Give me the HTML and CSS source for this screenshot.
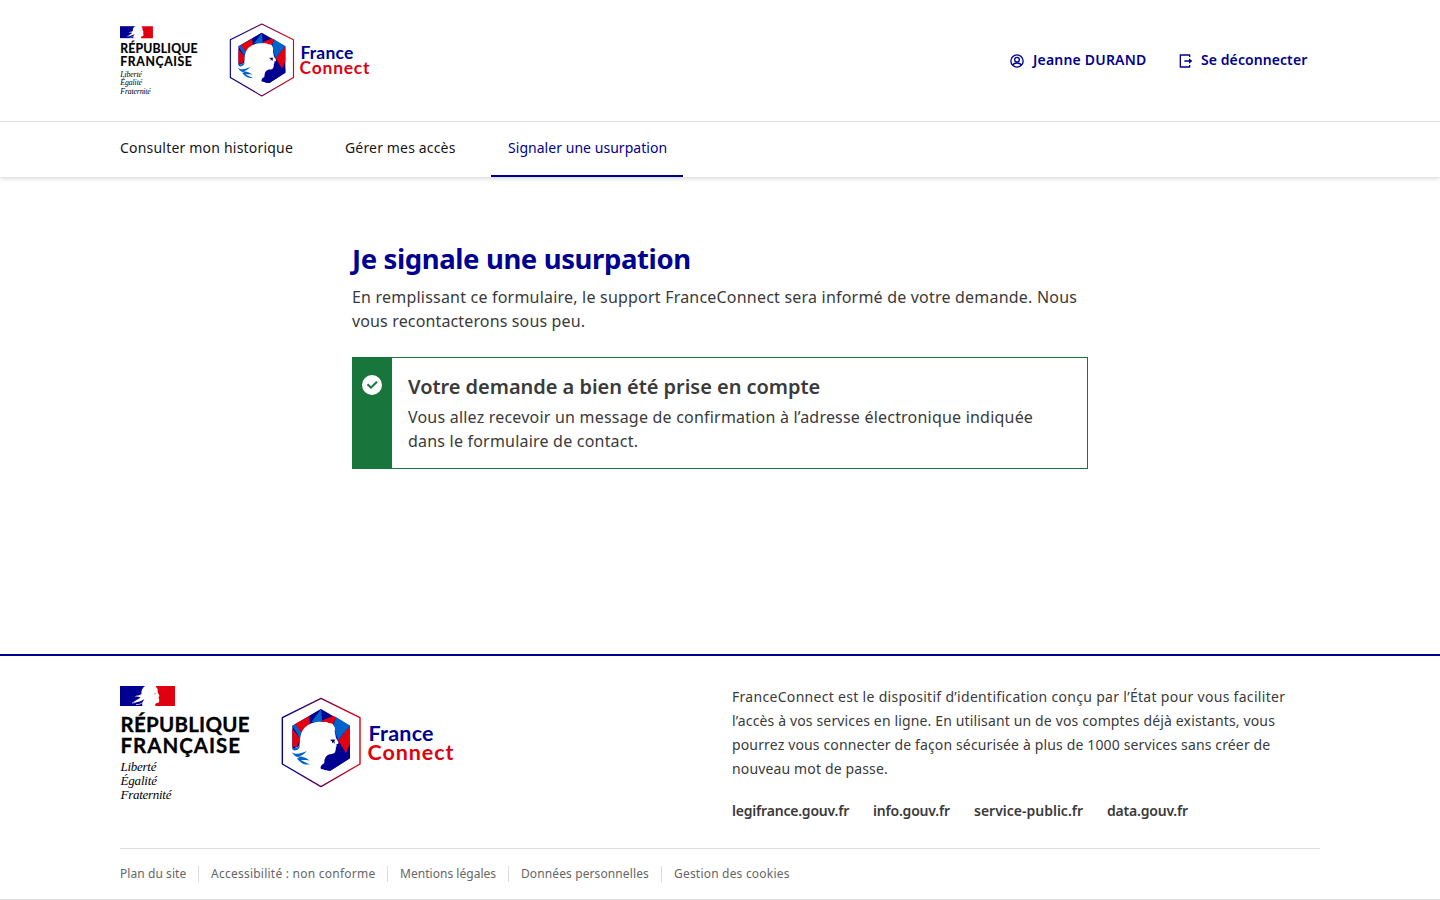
FILE: index.html
```html
<!DOCTYPE html>
<html lang="fr">
<head>
<meta charset="utf-8">
<title>Je signale une usurpation - FranceConnect</title>
<link rel="stylesheet" href="styles.css">
</head>
<body>
<svg class="defs" width="0" height="0" aria-hidden="true">
  <defs>
    <linearGradient id="hexline" x1="0" x2="1" y1="0" y2="0">
      <stop offset=".1" stop-color="#000091"/><stop offset=".95" stop-color="#e1000f"/>
    </linearGradient>
    <symbol id="rf" viewBox="0 0 132 118">
      <path fill="#000091" d="M0 0h26v20H0z"/>
      <path fill="#e1000f" d="M36 0h19v20H35z"/>
      <path fill="#fff" d="M25 0C22 2 21 5 21.500 8c-2 2-5 1-7 2.500 3 0 5 0 6 1l-7 4.500h3c3 0 6-2 8-3-2 3-3 5-2 7h13c-1-2 0-3 2-3 2-.500 2-2 1.500-4l-.500-2 1-1-2-4c1-3-1-5-3-6z"/>
      <path fill="none" stroke="#fff" stroke-width=".8" d="M12 17c4 0 7-3 11-4"/>
      <path fill="none" stroke="#fff" stroke-width=".7" d="M16 18.500c3 .5 5-1 7-2"/>
      <path fill="none" stroke="#777" stroke-width=".7" d="M34 8l2-.5"/>
      <g class="rf-title">
        <text x="0.500" y="45.500" textLength="129">RÉPUBLIQUE</text>
        <text x="0.500" y="66.500" textLength="119.500">FRANÇAISE</text>
      </g>
      <g class="rf-motto">
        <text x="0.500" y="85" textLength="36">Liberté</text>
        <text x="0.500" y="99" textLength="36.500">Égalité</text>
        <text x="0.500" y="113" textLength="51">Fraternité</text>
      </g>
    </symbol>
    <symbol id="fc" viewBox="0 0 174 91">
      <g transform="translate(-9 -7) scale(.33333)">
        <path fill="none" stroke="url(#hexline)" stroke-width="4.200" stroke-linejoin="round" d="M147 25l117 58v139l-117 68-116-68V83z"/>
        <path fill="#000091" d="M147 57l87 50v98l-59 37-28-5-50-75-36 15v-70z"/>
        <path fill="#e1000f" d="M68 103l44-25 6 30-32 24zM61 116l24 30-10 24-14 0zM148 92l35-14 9 3-12 32-22-12zM234 107v55l-12 27-24-38z"/>
        <path fill="#0063cb" d="M61 107l8-4 20 26-5 16zM117 96l30-38 4 40zM192 81l42 26-36 44-14-42z"/>
        <path fill="#000091" d="M112 78l35-21-27 36-6 12z"/>
        <path fill="#fff" d="M61 180c14 2 20-7 22-20 1-24 6-40 18-50 12-9 28-17 47-14 10 0 17-2 23 4 9-2 14 3 15 9 4 4 3 10 2 15l3 15c0 4 2 7 5 12 3 4 5 8 2 11l-5 1 1 6-3 4c2 5-1 7-1 11-2 8-9 8-17 9-12 3-16 14-16 26l-5 4c-6 4-6 9-7 15l-30-12-58-30z"/>
        <path fill="#000091" d="M174 150c5-2 9-1 16-1l-3 4 2 9-5-5-4 3 0-6z"/>
        <path fill="#0063cb" d="M62 173c9 3 16 0 22-8-1 12-10 19-22 15zM59 187c17 10 32 1 45-4-9 13-24 18-34 16 18-1 30 2 43 13-13-3-18-2-26-2 8 5 15 9 27 13-20 4-30-7-40-18 4 0 6 0 8-2-10-1-16-7-23-16z"/>
        <path fill="#000091" d="M196 200l38-12v17l-59 37c-10 0-22 0-20-10 0-6 3-11 9-15-1-7 11-9 19-9 8-2 11-3 13-8z"/>
      </g>
      <text class="fc-name" fill="#000091" x="87.500" y="44" textLength="65">France</text>
      <text class="fc-name" fill="#e1000f" x="86.500" y="62.700" textLength="86">Connect</text>
    </symbol>
  </defs>
</svg>

<header class="header">
  <div class="container header-body">
    <div class="brand">
      <svg class="rf-small" role="img" aria-label="République Française"><use href="#rf"/></svg>
      <svg class="fc-small" role="img" aria-label="FranceConnect"><use href="#fc"/></svg>
    </div>
    <div class="tools">
      <a class="tool user" href="#">
        <svg viewBox="0 0 24 24" fill="none" stroke="currentColor" stroke-width="2"><circle cx="12" cy="12" r="9.2"/><circle cx="12" cy="10" r="3.5"/><path d="M5.500 18c1.500-2.200 3.800-3 6.500-3s5 .8 6.500 3"/></svg>
        <span>Jeanne DURAND</span>
      </a>
      <a class="tool logout" href="#">
        <svg viewBox="0 0 24 24" fill="currentColor"><path d="M5 22a1 1 0 0 1-1-1V3a1 1 0 0 1 1-1h14a1 1 0 0 1 1 1v3h-2V4H6v16h12v-2h2v3a1 1 0 0 1-1 1H5zm13-6v-3h-7v-2h7V8l5 4-5 4z"/></svg>
        <span>Se déconnecter</span>
      </a>
    </div>
  </div>
  <nav class="nav">
    <div class="container nav-list">
      <a class="nav-link history" href="#">Consulter mon historique</a>
      <a class="nav-link access" href="#">Gérer mes accès</a>
      <a class="nav-link report active" href="#">Signaler une usurpation</a>
    </div>
  </nav>
</header>

<main class="main">
  <h1>Je signale une usurpation</h1>
  <p class="intro">En remplissant ce formulaire, le support FranceConnect sera informé de votre demande. Nous<br><span class="tight">vous recontacterons sous peu.</span></p>
  <div class="alert">
    <div class="alert-mark">
      <svg viewBox="0 0 20 20"><circle cx="10" cy="10" r="10" fill="#fff"/><path d="M5.500 9.200l3.500 3.500 6-6" fill="none" stroke="#18753c" stroke-width="2"/></svg>
    </div>
    <div class="alert-text">
      <h2>Votre demande a bien été prise en compte</h2>
      <p>Vous allez recevoir un message de confirmation à l’adresse électronique indiquée<br>dans le formulaire de contact.</p>
    </div>
  </div>
</main>

<footer class="footer">
  <div class="container">
    <div class="footer-body">
      <div class="footer-brand">
        <svg class="rf-large" role="img" aria-label="République Française"><use href="#rf"/></svg>
        <svg class="fc-large" role="img" aria-label="FranceConnect"><use href="#fc"/></svg>
      </div>
      <div class="footer-content">
        <p>FranceConnect est le dispositif d’identification conçu par l’État pour vous faciliter<br><span class="tight">l’accès à vos services en ligne. En utilisant un de vos comptes déjà existants, vous<br>pourrez vous connecter de façon sécurisée à plus de 1000 services sans créer de<br>nouveau mot de passe.</span></p>
        <div class="sites">
          <a class="w117" href="#">legifrance.gouv.fr</a>
          <a class="w77" href="#">info.gouv.fr</a>
          <a class="w109" href="#">service-public.fr</a>
          <a href="#">data.gouv.fr</a>
        </div>
      </div>
    </div>
    <div class="legal">
      <a class="l-plan" href="#">Plan du site</a>
      <a class="l-access" href="#">Accessibilité : non conforme</a>
      <a class="l-mentions" href="#">Mentions légales</a>
      <a class="l-data" href="#">Données personnelles</a>
      <a class="l-cookies" href="#">Gestion des cookies</a>
    </div>
  </div>
</footer>
</body>
</html>
```

FILE: styles.css
```css
* { box-sizing: border-box; }
body {
  margin: 0;
  height: 900px;
  overflow: hidden;
  display: flex;
  flex-direction: column;
  background: #fff;
  color: #3a3a3a;
  font: 16px/24px "Noto Sans", "Open Sans", sans-serif;
}
a { color: inherit; text-decoration: none; white-space: nowrap; }
h1, h2, p { margin: 0; }
svg { display: block; flex: none; }
.defs { position: absolute; }
.container { width: 1200px; margin: 0 auto; }

.rf-title { font: 700 20.5px Lato, sans-serif; fill: #000; stroke: #000; stroke-width: .3px; }
.rf-motto { font: italic 13px "Liberation Serif", serif; fill: #000; }
.fc-name { font: 700 21.5px Lato, sans-serif; stroke-width: 0; }

.header { box-shadow: 0 1px 5px rgba(0, 0, 18, .2); }
.header-body { display: flex; justify-content: space-between; height: 121px; }
.brand { display: flex; gap: 30px; padding-top: 23px; }
.rf-small { width: 79px; height: 71px; margin-top: 3px; }
.fc-small { width: 142px; height: 74px; }
.tools { display: flex; align-items: flex-start; gap: 30px; padding: 48px 12px 0 0; }
.tool {
  display: flex;
  align-items: center;
  gap: 8px;
  color: #000091;
  font-size: 14px;
  font-weight: 580;
}
.tool svg { width: 16px; height: 16px; margin: 2px 0 0 -1px; }
.user { letter-spacing: .2px; }
.logout { letter-spacing: .08px; }
.user span { width: 115px; }
.logout span { width: 107px; }
.nav { height: 56px; border-top: 1px solid #ddd; }
.nav-list { display: flex; gap: 20px; }
.nav-link {
  height: 55px;
  padding: 14px 16px 0;
  color: #161616;
  font-size: 14px;
}
.history { width: 205px; margin-left: -16px; letter-spacing: .2px; }
.access { width: 142px; letter-spacing: .16px; }
.report { width: 192px; padding-left: 17px; letter-spacing: .04px; }
.nav .active { color: #000091; border-bottom: 2px solid #000091; }

.main { width: 736px; margin: 0 auto; padding-top: 62px; flex: 1; }
h1 { color: #000091; font-size: 27.5px; font-weight: 670; line-height: 40px; letter-spacing: -.39px; white-space: nowrap; }
.intro { margin-top: 6px; letter-spacing: .206px; white-space: nowrap; }
.intro .tight { letter-spacing: .14px; }
.alert { display: flex; height: 112px; margin-top: 24px; border: 1px solid #18753c; }
.alert-mark { width: 39px; padding: 17px 0 0 9px; background: #18753c; }
.alert-mark svg { width: 20px; height: 20px; }
.alert-text { padding: 15px 0 0 16px; white-space: nowrap; letter-spacing: .207px; }
h2 { font-size: 20px; font-weight: 630; line-height: 28px; letter-spacing: -.04px; margin-bottom: 4px; }

.footer { height: 246px; border-top: 2px solid #000091; border-bottom: 1px solid #ddd; }
.footer-body { display: flex; height: 193px; padding-top: 30px; border-bottom: 1px solid #ddd; }
.footer-brand { display: flex; gap: 29px; width: 612px; }
.rf-large { width: 132px; height: 118px; }
.fc-large { width: 174px; height: 91px; margin-top: 11px; }
.footer-content { font-size: 14px; white-space: nowrap; }
.footer-content p { letter-spacing: .303px; margin-top: -1px; }
.footer-content .tight { letter-spacing: .145px; }
.sites { display: flex; gap: 24px; margin-top: 18px; font-weight: 600; letter-spacing: -.2px; }
.w117 { width: 117px; }
.w77 { width: 77px; }
.w109 { width: 109px; letter-spacing: 0; }
.legal { display: flex; padding-top: 17px; color: #666; font-size: 12px; line-height: 16px; letter-spacing: .15px; }
.legal a + a { border-left: 1px solid #ddd; padding-left: 12px; }
.l-plan { width: 78px; letter-spacing: .07px; }
.l-access { width: 189px; letter-spacing: .24px; }
.l-mentions { width: 121px; letter-spacing: .03px; }
.l-data { width: 153px; letter-spacing: .11px; }
.l-cookies { letter-spacing: .2px; }
```
